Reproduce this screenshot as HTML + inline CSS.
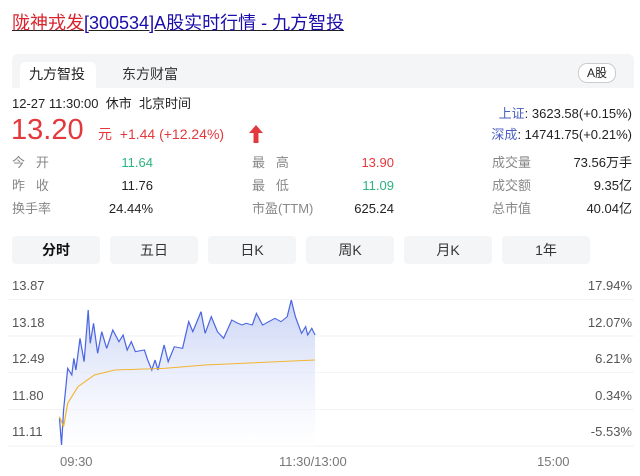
<!DOCTYPE html>
<html><head><meta charset="utf-8"><style>
body{margin:0;width:640px;height:476px;background:#fff;font-family:"Liberation Sans","Noto Sans CJK SC",sans-serif;position:relative;overflow:hidden;color:#222}
.a{position:absolute;white-space:nowrap}
.g{color:#888}
.s .a{line-height:16px;height:16px}
</style></head><body>
<div class="a" style="left:12px;top:9px;font-size:18px;text-decoration:underline"><span style="color:#d9232d">陇神戎发</span><span style="color:#1a0dab">[300534]A股实时行情 - 九方智投</span></div>
<div class="a" style="left:12px;top:54px;width:622px;height:34px;background:#f4f5f7;border-radius:6px 6px 0 0"></div>
<div class="a" style="left:20px;top:62px;width:76px;height:26px;background:#fff;border-radius:5px 5px 0 0"></div>
<div class="a" style="left:29px;top:60px;font-size:14px;line-height:28px">九方智投</div>
<div class="a" style="left:122px;top:60px;font-size:14px;line-height:28px;color:#333">东方财富</div>
<div class="a" style="left:578px;top:63px;width:36px;height:18px;border:1px solid #ccc;border-radius:9px;background:#fff;font-size:12px;line-height:18px;text-align:center">A股</div>
<div class="a" style="left:12px;top:96px;font-size:13px;line-height:16px">12-27 11:30:00&nbsp; 休市&nbsp; 北京时间</div>
<div class="a" style="left:11px;top:113px;font-size:29px;line-height:34px;color:#e4393c">13.20</div>
<div class="a" style="left:98px;top:125px;font-size:14px;line-height:18px;color:#e4393c">元&nbsp; +1.44 (+12.24%)</div>
<svg class="a" style="left:248px;top:124px" width="16" height="20" viewBox="0 0 16 20"><path d="M8 1 L15 9 L10.5 9 L10.5 19 L5.5 19 L5.5 9 L1 9Z" fill="#e4393c"/></svg>
<div class="a" style="right:8px;top:106px;font-size:13px;line-height:16px"><span style="color:#4a5fc1">上证</span>: 3623.58(+0.15%)</div>
<div class="a" style="right:8px;top:127px;font-size:13px;line-height:16px"><span style="color:#4a5fc1">深成</span>: 14741.75(+0.21%)</div>
<div class="s" style="font-size:13px">
<div class="a g" style="left:12px;top:155px">今&nbsp;&nbsp; 开</div><div class="a" style="right:487px;top:155px;color:#2bb47e">11.64</div>
<div class="a g" style="left:12px;top:178px">昨&nbsp;&nbsp; 收</div><div class="a" style="right:487px;top:178px">11.76</div>
<div class="a g" style="left:12px;top:201px">换手率</div><div class="a" style="right:487px;top:201px">24.44%</div>
<div class="a g" style="left:252px;top:155px">最&nbsp;&nbsp; 高</div><div class="a" style="right:246px;top:155px;color:#e4393c">13.90</div>
<div class="a g" style="left:252px;top:178px">最&nbsp;&nbsp; 低</div><div class="a" style="right:246px;top:178px;color:#2bb47e">11.09</div>
<div class="a g" style="left:252px;top:201px">市盈(TTM)</div><div class="a" style="right:246px;top:201px">625.24</div>
<div class="a g" style="left:492px;top:155px">成交量</div><div class="a" style="right:8px;top:155px">73.56万手</div>
<div class="a g" style="left:492px;top:178px">成交额</div><div class="a" style="right:8px;top:178px">9.35亿</div>
<div class="a g" style="left:492px;top:201px">总市值</div><div class="a" style="right:8px;top:201px">40.04亿</div>
</div>
<div style="font-size:14px;color:#333">
<div class="a" style="left:12px;top:236px;width:88px;height:28px;background:#f4f5f7;border-radius:4px;text-align:center;line-height:28px;font-weight:bold;color:#111">分时</div>
<div class="a" style="left:110px;top:236px;width:88px;height:28px;background:#f4f5f7;border-radius:4px;text-align:center;line-height:28px">五日</div>
<div class="a" style="left:208px;top:236px;width:88px;height:28px;background:#f4f5f7;border-radius:4px;text-align:center;line-height:28px">日K</div>
<div class="a" style="left:306px;top:236px;width:88px;height:28px;background:#f4f5f7;border-radius:4px;text-align:center;line-height:28px">周K</div>
<div class="a" style="left:404px;top:236px;width:88px;height:28px;background:#f4f5f7;border-radius:4px;text-align:center;line-height:28px">月K</div>
<div class="a" style="left:502px;top:236px;width:88px;height:28px;background:#f4f5f7;border-radius:4px;text-align:center;line-height:28px">1年</div>
</div>
<div style="font-size:13px;color:#555">
<div class="a" style="left:12px;top:278px">13.87</div><div class="a" style="right:8px;top:278px">17.94%</div>
<div class="a" style="left:12px;top:315px">13.18</div><div class="a" style="right:8px;top:315px">12.07%</div>
<div class="a" style="left:12px;top:351px">12.49</div><div class="a" style="right:8px;top:351px">6.21%</div>
<div class="a" style="left:12px;top:388px">11.80</div><div class="a" style="right:8px;top:388px">0.34%</div>
<div class="a" style="left:12px;top:424px">11.11</div><div class="a" style="right:8px;top:424px">-5.53%</div>
<div class="a" style="left:60px;top:454px;color:#777">09:30</div>
<div class="a" style="left:279px;top:454px;color:#777">11:30/13:00</div>
<div class="a" style="left:537px;top:454px;color:#777">15:00</div>
</div>
<svg class="a" style="left:0;top:270px" width="640" height="206" viewBox="0 0 1560 618" preserveAspectRatio="none">
<defs><linearGradient id="f" x1="0" y1="0" x2="0" y2="1"><stop offset="0" stop-color="#c9d3f5"/><stop offset="1" stop-color="#fff" stop-opacity="0.5"/></linearGradient></defs>
<g stroke="#eee" stroke-width="2"><line x1="20" y1="88" x2="1545" y2="88"/><line x1="20" y1="198" x2="1545" y2="198"/><line x1="20" y1="308" x2="1545" y2="308"/><line x1="20" y1="418" x2="1545" y2="418"/><line x1="20" y1="528" x2="1545" y2="528"/></g>
<path d="M145,445 L150,525 L155,420 L165,295 L175,315 L180,265 L185,300 L195,205 L205,275 L215,120 L220,220 L228,160 L238,250 L248,185 L260,235 L275,180 L290,215 L300,195 L310,240 L320,215 L330,245 L352,240 L360,270 L370,300 L378,270 L385,300 L400,225 L410,275 L425,230 L445,235 L460,155 L470,185 L490,125 L500,190 L515,140 L530,185 L545,205 L565,150 L580,160 L590,165 L600,160 L615,165 L625,130 L640,165 L655,155 L670,145 L685,155 L700,140 L710,90 L720,140 L735,190 L745,170 L750,195 L760,175 L768,195 L768,528 L145,528Z" fill="url(#f)"/>
<path d="M145,445 L150,525 L155,420 L165,295 L175,315 L180,265 L185,300 L195,205 L205,275 L215,120 L220,220 L228,160 L238,250 L248,185 L260,235 L275,180 L290,215 L300,195 L310,240 L320,215 L330,245 L352,240 L360,270 L370,300 L378,270 L385,300 L400,225 L410,275 L425,230 L445,235 L460,155 L470,185 L490,125 L500,190 L515,140 L530,185 L545,205 L565,150 L580,160 L590,165 L600,160 L615,165 L625,130 L640,165 L655,155 L670,145 L685,155 L700,140 L710,90 L720,140 L735,190 L745,170 L750,195 L760,175 L768,195" fill="none" stroke="#4a66e0" stroke-width="3"/>
<path d="M145,440 L155,470 L165,400 L190,350 L230,315 L280,300 L400,295 L500,285 L768,270" fill="none" stroke="#f2b531" stroke-width="3"/>
</svg>
</body></html>
